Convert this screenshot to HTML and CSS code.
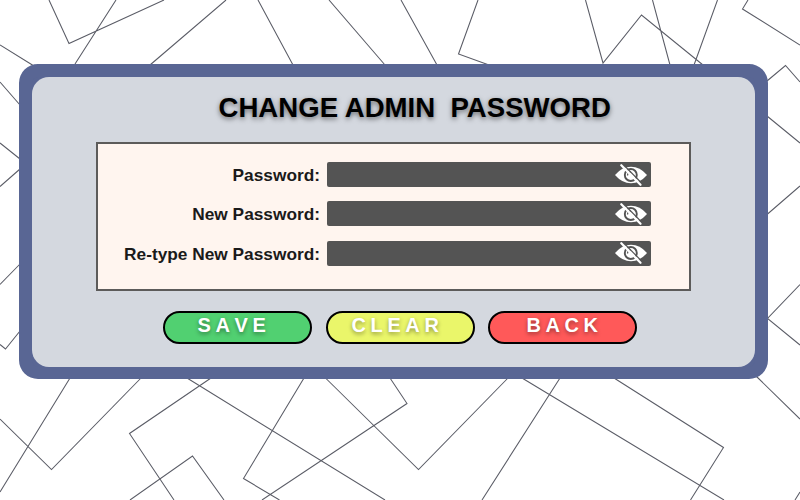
FILE: index.html
```html
<!DOCTYPE html>
<html lang="en">
<head>
<meta charset="utf-8">
<title>Change Admin Password</title>
<link rel="stylesheet" href="styles.css">
</head>
<body>
<svg class="backdrop" viewBox="0 0 800 500" aria-hidden="true">
  <path d="M49 0L69 43.5L164 0M116 0L75 64M0 45L34 66M0 82L20 105M226 0L150 65M258 0L293 65M329 0L385 65M401 0L437 65M478 0L458.5 54L489 65M585.5 0L603 63L641.5 15L703 65M652.5 0L670 65M717.5 0L694 65M748 0L742.5 9L800 45M767 81L785.500 65.500L800 82M767 116L800 143M767 214.500L800 186M800 284.500L767.500 318.500L800 345"/>
  <path d="M70 378L0 492M0 419L51.500 469.500L141 378M211 378L129.500 433.500L174 500M130 500L192.500 456L224 500M187 378L385 500M304 378L243.500 478.500L279.500 500M390 378L407 403.500L262 500M325.500 378L418.500 469.500L508 378M522 378L724 500M560 378L482 500M614 378L723.500 447.500L690.500 500M756 376L800 419M795 500L800 492"/>
  <path d="M0 143L20 159M20 169L0 186.500M20 264L0 284.500M0 344.500L5.500 349L20 331"/>
</svg>
<svg class="symbols" aria-hidden="true">
  <symbol id="eye-off" viewBox="0 0 32 22">
    <path class="eye" d="M0 11Q7 2.800 16 2.800Q25 2.800 32 11Q25 19.200 16 19.200Q7 19.200 0 11Z"/>
    <circle class="iris" cx="15.800" cy="11" r="6"/>
    <path class="glint" d="M12.500 11.500Q12.800 8 16 7.800"/>
    <path class="gap" d="M8.200 .5L28 20.500"/>
    <path class="slash" d="M6.300 1.200L25.500 20.800"/>
  </symbol>
</svg>
<main class="panel">
  <h1 class="title">CHANGE ADMIN&nbsp; PASSWORD</h1>
  <form class="card">
    <div class="row"><span class="label">Password:</span><div class="field"><svg class="icon"><use href="#eye-off"/></svg></div></div>
    <div class="row"><span class="label">New Password:</span><div class="field"><svg class="icon"><use href="#eye-off"/></svg></div></div>
    <div class="row"><span class="label">Re-type New Password:</span><div class="field"><svg class="icon"><use href="#eye-off"/></svg></div></div>
  </form>
  <div class="actions">
    <button class="btn save" type="button">SAVE</button>
    <button class="btn clear" type="button">CLEAR</button>
    <button class="btn back" type="button">BACK</button>
  </div>
</main>
</body>
</html>
```
FILE: styles.css
```css
* { box-sizing: border-box; }
body {
  margin: 0;
  width: 800px;
  height: 500px;
  overflow: hidden;
  padding: 64px 0 0 19px;
  background: #fff;
  font-family: "Liberation Sans", Arial, sans-serif;
  font-weight: bold;
}
.backdrop {
  position: absolute;
  inset: 0;
  width: 800px;
  height: 500px;
  z-index: -1;
  fill: none;
  stroke: #5a5c66;
  stroke-width: 1.050;
}
.symbols { position: absolute; width: 0; height: 0; }
.panel {
  width: 749px;
  height: 315.300px;
  border: 13px solid #596694;
  border-bottom-width: 12.500px;
  border-radius: 19px;
  background: #596694;
  position: relative;
  z-index: 0;
}
.panel::before {
  content: "";
  position: absolute;
  inset: 0;
  z-index: -1;
  border-radius: 17px;
  background: #d4d8df;
}
.title {
  margin: 0;
  padding: 14px 0 0 186.500px;
  height: 65px;
  font-size: 27.600px;
  line-height: 33px;
  white-space: nowrap;
  color: #000;
  text-shadow: 0 2px 5px rgba(0, 0, 0, .5);
}
.card {
  margin-left: 64px;
  width: 595px;
  height: 149px;
  border: 2px solid #5c5b5a;
  background: #fff5ef;
  padding: 18px 38px 0 0;
  display: flex;
  flex-direction: column;
  gap: 14.450px;
}
.row {
  display: flex;
  justify-content: flex-end;
  align-items: center;
  gap: 7px;
  height: 25px;
}
.label { padding-top: 2px; font-size: 17.300px; line-height: 25px; color: #1a1a1a; white-space: nowrap; }
.field {
  width: 324px;
  height: 25px;
  border-radius: 2px;
  background: #545454;
  display: flex;
  justify-content: flex-end;
  align-items: center;
  padding-right: 4px;
}
.icon { width: 32px; height: 22px; }
.eye { fill: #fff; }
.iris { fill: none; stroke: #545454; stroke-width: 1.900; }
.glint { fill: none; stroke: #545454; stroke-width: 1.300; }
.gap { stroke: #545454; stroke-width: 1.200; }
.slash { stroke: #fff; stroke-width: 2.200; stroke-linecap: round; }
.actions {
  display: flex;
  gap: 13.500px;
  margin: 19.500px 0 0 131px;
}
.btn {
  width: 149px;
  height: 33px;
  border: 2px solid #000;
  border-radius: 17px;
  padding: 0 5px 5px 0;
  font: bold 20px/20px "Liberation Sans", Arial, sans-serif;
  letter-spacing: 4.600px;
  font-kerning: none;
  color: #fff;
  text-shadow: 0 2px 4px rgba(0, 0, 0, .4);
}
.save { background: #51d071; padding-right: 7px; }
.clear { background: #eaf66a; }
.back { background: #ff5959; padding: 0 0 5px 4px; }
```
